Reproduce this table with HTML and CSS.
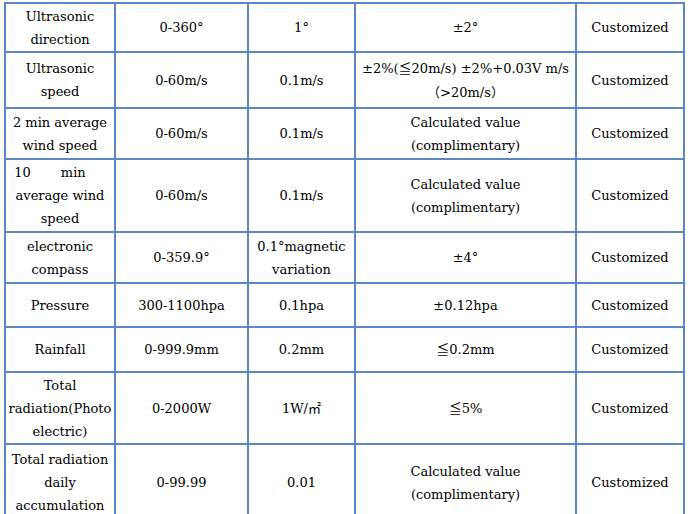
FILE: index.html
```html
<!DOCTYPE html>
<html>
<head>
<meta charset="utf-8">
<link rel="stylesheet" href="styles.css">
</head>
<body>
<table class="spec">
  <colgroup>
    <col class="c1"><col class="c2"><col class="c3"><col class="c4"><col class="c5">
  </colgroup>
  <tr class="r1">
    <td>Ultrasonic<br>direction</td>
    <td>0-360°</td>
    <td>1°</td>
    <td>±2°</td>
    <td>Customized</td>
  </tr>
  <tr class="r2">
    <td>Ultrasonic<br>speed</td>
    <td>0-60m/s</td>
    <td>0.1m/s</td>
    <td>±2%(≦20m/s) ±2%+0.03V m/s<br><span class="cjk">（</span>&gt;20m/s<span class="cjk">）</span></td>
    <td>Customized</td>
  </tr>
  <tr class="r3">
    <td>2 min average<br>wind speed</td>
    <td>0-60m/s</td>
    <td>0.1m/s</td>
    <td>Calculated value<br>(complimentary)</td>
    <td>Customized</td>
  </tr>
  <tr class="r4">
    <td><span class="just">10<span class="gap"></span>min</span><br>average wind<br>speed</td>
    <td>0-60m/s</td>
    <td>0.1m/s</td>
    <td>Calculated value<br>(complimentary)</td>
    <td>Customized</td>
  </tr>
  <tr class="r5">
    <td>electronic<br>compass</td>
    <td>0-359.9°</td>
    <td>0.1°magnetic<br>variation</td>
    <td>±4°</td>
    <td>Customized</td>
  </tr>
  <tr class="r6">
    <td>Pressure</td>
    <td>300-1100hpa</td>
    <td>0.1hpa</td>
    <td>±0.12hpa</td>
    <td>Customized</td>
  </tr>
  <tr class="r7">
    <td>Rainfall</td>
    <td>0-999.9mm</td>
    <td>0.2mm</td>
    <td>≦0.2mm</td>
    <td>Customized</td>
  </tr>
  <tr class="r8">
    <td>Total<br>radiation(Photo<br>electric)</td>
    <td>0-2000W</td>
    <td>1W/㎡</td>
    <td>≦5%</td>
    <td>Customized</td>
  </tr>
  <tr class="r9">
    <td>Total radiation<br>daily<br>accumulation</td>
    <td>0-99.99</td>
    <td>0.01</td>
    <td>Calculated value<br>(complimentary)</td>
    <td>Customized</td>
  </tr>
</table>
</body>
</html>
```

FILE: styles.css
```css
html, body {
  margin: 0;
  padding: 0;
  background: #ffffff;
}

body {
  font-family: "DejaVu Serif", "Liberation Serif", "Noto Sans CJK SC", serif;
  font-size: 13px;
  color: #000000;
}

.spec {
  margin: 2px 0 0 4px;
  border-collapse: separate;
  border-spacing: 0;
  border-left: 2px solid #5b87c4;
  border-top: 2px solid #5b87c4;
  table-layout: fixed;
  width: 681px;
}

.spec td {
  border-right: 2px solid #5b87c4;
  border-bottom: 2px solid #5b87c4;
  padding: 0;
  text-align: center;
  vertical-align: middle;
  line-height: 23px;
  white-space: nowrap;
}

.c1 { width: 110px; }
.c2 { width: 133px; }
.c3 { width: 107px; }
.c4 { width: 221px; }
.c5 { width: 108px; }

.r1 { height: 49px; }
.r2 { height: 56px; }
.r3 { height: 51px; }
.r4 { height: 73px; }
.r5 { height: 51px; }
.r6 { height: 44px; }
.r7 { height: 45px; }
.r8 { height: 72px; }
.r9 { height: 77px; }

.cjk {
  font-family: "Noto Sans CJK SC", sans-serif;
}

.just {
  display: inline-block;
  margin-right: 20px;
}

.gap {
  display: inline-block;
  width: 30px;
}
```
